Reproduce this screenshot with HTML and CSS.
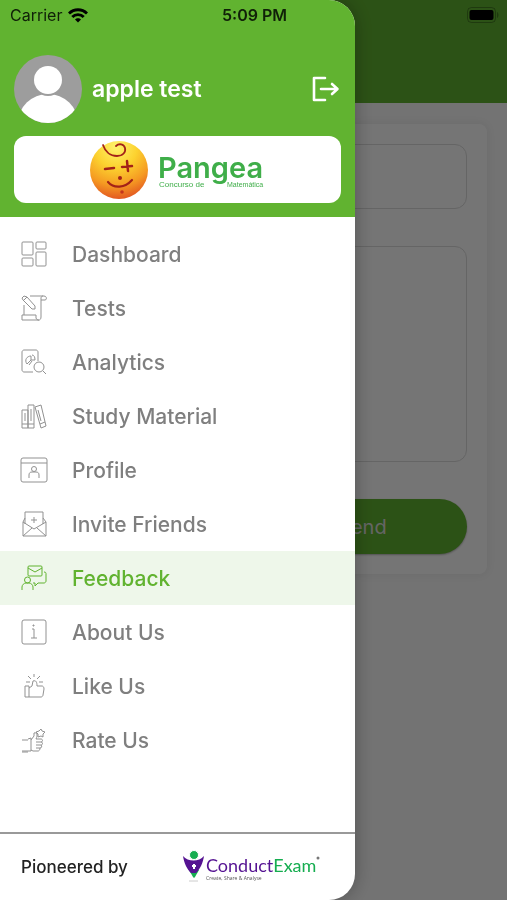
FILE: index.html
```html
<!DOCTYPE html>
<html lang="en">
<head>
<meta charset="utf-8">
<meta name="viewport" content="width=device-width, initial-scale=1">
<title>Feedback</title>
<link rel="stylesheet" href="styles.css">
</head>
<body>
<div class="page">
  <div class="appbar"></div>
  <form class="card">
    <input class="field" type="text" aria-label="Subject">
    <textarea class="field message" aria-label="Message"></textarea>
    <button class="send" type="button">Send</button>
  </form>
</div>
<div class="scrim"></div>

<aside class="drawer">
  <header class="head">
    <div class="profile">
      <svg class="avatar" viewBox="0 0 68 68" aria-hidden="true">
        <defs><clipPath id="disc"><circle cx="34" cy="34" r="34"/></clipPath></defs>
        <circle cx="34" cy="34" r="34" fill="#9d9d9d"/>
        <ellipse cx="34" cy="68" rx="30" ry="29" fill="#fff" clip-path="url(#disc)"/>
        <circle cx="34" cy="25" r="16" fill="#9d9d9d"/>
        <circle cx="34" cy="25" r="14" fill="#fff"/>
      </svg>
      <span class="name">apple test</span>
      <button class="logout" type="button" aria-label="Log out">
        <svg width="28" height="26" viewBox="0 0 28 26" fill="none" stroke="#fff" stroke-width="2.600" stroke-linecap="round" stroke-linejoin="round"><path d="M13 2H2v22h11M9 13h16M20 8l5.500 5-5.500 5"/></svg>
      </button>
    </div>
    <div class="brand">
      <svg width="176" height="61" viewBox="0 0 176 61" role="img" aria-label="Pangea Concurso de Matemática">
        <defs>
          <radialGradient id="face" cx=".45" cy=".1" r=".95"><stop offset="0" stop-color="#fff36c"/><stop offset=".38" stop-color="#fcd22f"/><stop offset=".7" stop-color="#f59a22"/><stop offset="1" stop-color="#df4a21"/></radialGradient>
        </defs>
        <circle cx="30" cy="31" r="29" fill="url(#face)"/>
        <g fill="none" stroke="#a32218" stroke-width="1.800" stroke-linecap="round">
          <path d="M14 6c2 6 7 11 14 11 6 0 9-4 8-8-1-4-6-5-9-2"/>
          <path d="M16 30l9-1M33 28l10-1M38 22l1 10" stroke-width="2.500"/>
          <path d="M19 43c6 7 17 6 24-2" stroke-width="2.200"/>
        </g>
        <circle cx="31" cy="39" r="2" fill="#a32218"/><circle cx="33" cy="53" r="1.800" fill="#c3331c"/>
        <text class="pangea" x="69" y="39">Pangea</text>
        <text class="tag" x="70" y="48">Concurso de</text>
        <text class="tag small" x="138" y="48">Matemática</text>
      </svg>
    </div>
  </header>

  <nav class="menu">
    <a class="item" href="#dashboard"><svg class="icon" viewBox="0 0 28 28"><rect x="2" y="2" width="11" height="13" rx="1"/><rect x="16" y="2" width="10" height="7" rx="1"/><rect x="2" y="18" width="11" height="8" rx="1"/><rect x="16" y="12" width="10" height="14" rx="1"/></svg>Dashboard</a>
    <a class="item" href="#tests"><svg class="icon" viewBox="0 0 28 28"><path d="M10 2h14c3 0 3 4 1 4h-4V4c0-1 1-2 2-2M21 6v17c0 4-4 4-5 1v-3H2v5h17M4 11v10M2 4l2-2 3 1 8 9v3h-3L3 6zM4 6l3-3"/></svg>Tests</a>
    <a class="item" href="#analytics"><svg class="icon" viewBox="0 0 28 28"><path d="M13 24H4c-1 0-2-1-2-2V4c0-1 1-2 2-2h12c1 0 2 1 2 2v9M7 16c-3-4 0-8 4-8v4l-4 4M9 17l3-4M12 7c2 0 3 2 3 5h-4"/><circle cx="19" cy="19" r="5"/><path d="M23 23l3 3"/></svg>Analytics</a>
    <a class="item" href="#study"><svg class="icon" viewBox="0 0 28 28"><path d="M2 8h6v18H2zM8 3h6v23H8zM2 22h6M8 22h6M15 5l6-2 5 21-5 2zM20 22l5-2M5 11v8M11 7v12M18 8l3 11"/></svg>Study Material</a>
    <a class="item" href="#profile"><svg class="icon" viewBox="0 0 28 28"><rect x="1" y="2" width="26" height="24" rx="2"/><path d="M1 7h26M9 22v-3c0-2 1-3 3-3h4c2 0 3 1 3 3v3"/><circle cx="14" cy="13" r="2.500"/></svg>Profile</a>
    <a class="item" href="#invite"><svg class="icon" viewBox="0 0 28 28"><path d="M5 14V2h18v12M5 8l-2 4v14h23V12l-3-4M3 12l11 7 12-7M3 26l9-8M26 26l-9-8M14 7v6M11 10h6"/></svg>Invite Friends</a>
    <a class="item active" href="#feedback" aria-current="page"><svg class="icon" viewBox="0 0 28 28"><rect x="8" y="2" width="14" height="10" rx="1"/><path d="M8 4l7 4 7-4M24 8c2 0 2 1 2 2v7c0 1-1 2-2 2h-6l-3 3v-3h-2M2 26v-3c0-2 2-4 4-4h3c2 0 4 2 4 4v3"/><circle cx="7.500" cy="16" r="3"/></svg>Feedback</a>
    <a class="item" href="#about"><svg class="icon" viewBox="0 0 28 28"><rect x="2" y="2" width="24" height="24" rx="2"/><path d="M12 11h2v9M11 20h6M13 7h1v1h-1z"/></svg>About Us</a>
    <a class="item" href="#like"><svg class="icon" viewBox="0 0 28 28"><path d="M5 14h4v11H5zM9 16l3-2 1-5c3-1 4 1 4 5h5c1 0 2 1 2 3l-1 6c0 1-1 2-2 2H9M14 2v3M8 4l3 3M20 4l-3 3M6 10h4M19 10h4"/></svg>Like Us</a>
    <a class="item" href="#rate"><svg class="icon" viewBox="0 0 28 28"><path d="M2 14h6M2 26h6M8 13l3-1v13H2M11 14l3-4V7c3-1 4 2 2 6h5c2 0 2 3 0 3 2 0 2 3 0 3 1 1 1 3-1 3 0 2-1 3-2 3h-5l-2-1M16 16h5M16 19h5M16 22h4M21 3l1 2 3 1-2 2v3l-2-1-3 1V8l-2-2 3-1z"/></svg>Rate Us</a>
  </nav>

  <footer class="foot">
    <span>Pioneered by</span>
    <svg width="138" height="34" viewBox="0 0 138 34" role="img" aria-label="ConductExam. Create, Share &amp; Analyse">
      <path d="M7 20h10l-4 7-1 1-1-1z" fill="#16ad50"/>
      <path d="M1 6c5 6 16 6 21 0-1 7-4 13-8 17h-5C5 19 2 13 1 6z" fill="#551392"/>
      <circle cx="12" cy="5" r="4.500" fill="#16ad50" stroke="#fff"/>
      <path d="M10 16h4M12 14v5" stroke="#fff" stroke-width="2"/>
      <path d="M7 31h9" stroke="#ccc"/>
      <text class="conduct" x="24" y="22">Conduct<tspan class="exam">Exam</tspan></text>
      <text class="mini" x="24" y="30">Create, Share &amp; Analyse</text>
      <circle cx="136" cy="8" r="1.500" fill="#777"/>
    </svg>
  </footer>
</aside>

<div class="status">
  <span class="carrier">Carrier
    <svg width="20" height="15" viewBox="0 0 20 15" fill="none" stroke="#000" stroke-width="2.800" aria-hidden="true"><path d="M1 5.500c5-5 13-5 18 0M4.300 9c3-3.300 8.400-3.300 11.400 0"/><path d="M10 14.500l-3-3c1.500-1.600 4.500-1.600 6 0z" fill="#000" stroke="none"/></svg>
  </span>
  <time class="time">5:09 PM</time>
  <svg class="battery" width="32" height="16" viewBox="0 0 32 16" aria-hidden="true"><rect x=".5" y=".5" width="28" height="15" rx="4" fill="none" stroke="#000" stroke-opacity=".3"/><rect x="2.500" y="3" width="24" height="10" rx="2"/><path d="M30 5v6c2-1 2-5 0-6z" opacity=".3"/></svg>
</div>
</body>
</html>
```
FILE: styles.css
```css
* { box-sizing: border-box; }

body {
  margin: 0;
  min-height: 100vh;
  background: #fafafa;
  font-family: Inter, "Liberation Sans", sans-serif;
}

button { border: 0; cursor: pointer; }

.appbar { height: 103px; background: #61b330; }

.card {
  display: flex;
  flex-direction: column;
  margin: 21px 20px;
  padding: 20px;
  border-radius: 8px;
  background: #fff;
  box-shadow: 0 0 10px rgba(0, 0, 0, .08);
}

.field {
  width: 100%;
  height: 65px;
  padding: 12px;
  border: 1px solid #dcdcdc;
  border-radius: 12px;
  background: transparent;
  font: inherit;
}

.message { height: 216px; margin: 37px 0; resize: none; }

.send {
  align-self: flex-end;
  width: 49%;
  height: 55px;
  border-radius: 28px;
  background: #61b330;
  color: #ddd;
  font: 400 20px Inter, sans-serif;
  box-shadow: 0 1px 2px rgba(0, 0, 0, .3);
}

.scrim { position: fixed; inset: 0; background: rgba(0, 0, 0, .54); }

.drawer {
  position: fixed;
  inset: 0 auto 0 0;
  width: 70%;
  display: flex;
  flex-direction: column;
  overflow: hidden;
  border-radius: 0 26px 26px 0;
  background: #fff;
  box-shadow: 0 0 20px rgba(0, 0, 0, .3);
}

.head { padding: 55px 14px 14px; background: #61b330; }

.profile { display: flex; align-items: center; gap: 10px; margin-bottom: 13px; }
.avatar { width: 68px; height: 68px; }
.name { flex: 1; color: #fff; font-size: 23px; font-weight: 600; }
.logout { display: flex; padding: 0 1px; background: none; }

.brand {
  display: flex;
  justify-content: center;
  padding: 3px 0;
  border-radius: 12px;
  background: #fff;
}

.pangea { font: 600 29px Inter, sans-serif; fill: #3fae49; }
.tag { font: 400 8px "Liberation Sans", sans-serif; fill: #3fae49; }
.tag.small { font-size: 7px; }

.menu { flex: 1; padding-top: 10px; }

.item {
  display: flex;
  align-items: center;
  gap: 24px;
  height: 54px;
  padding: 0 20px;
  color: #7f7f7f;
  font-size: 21px;
  font-weight: 500;
  text-decoration: none;
}

.item.active { background: #eef7ea; color: #61b330; }

.icon {
  width: 28px;
  height: 28px;
  fill: none;
  stroke: #919191;
  stroke-width: 1;
  stroke-linejoin: round;
}

.active .icon { stroke: currentColor; }

.foot {
  display: flex;
  align-items: center;
  justify-content: space-between;
  height: 68px;
  padding: 0 35px 0 21px;
  border-top: 2px solid #999;
  color: #222;
  font-size: 17px;
  font-weight: 500;
}

.conduct { font: 400 18px Lato, sans-serif; fill: #551392; }
.exam { fill: #16ad50; }
.mini { font: 400 5px "Open Sans", sans-serif; fill: #555; }

.status {
  position: fixed;
  inset: 0 0 auto;
  display: grid;
  grid-template-columns: 1fr auto 1fr;
  align-items: center;
  height: 30px;
  padding: 0 8px 0 10px;
  color: #102008;
  font-size: 16px;
}

.carrier { display: flex; align-items: center; gap: 6px; }
.time { font-weight: 600; }
.battery { justify-self: end; }
```
